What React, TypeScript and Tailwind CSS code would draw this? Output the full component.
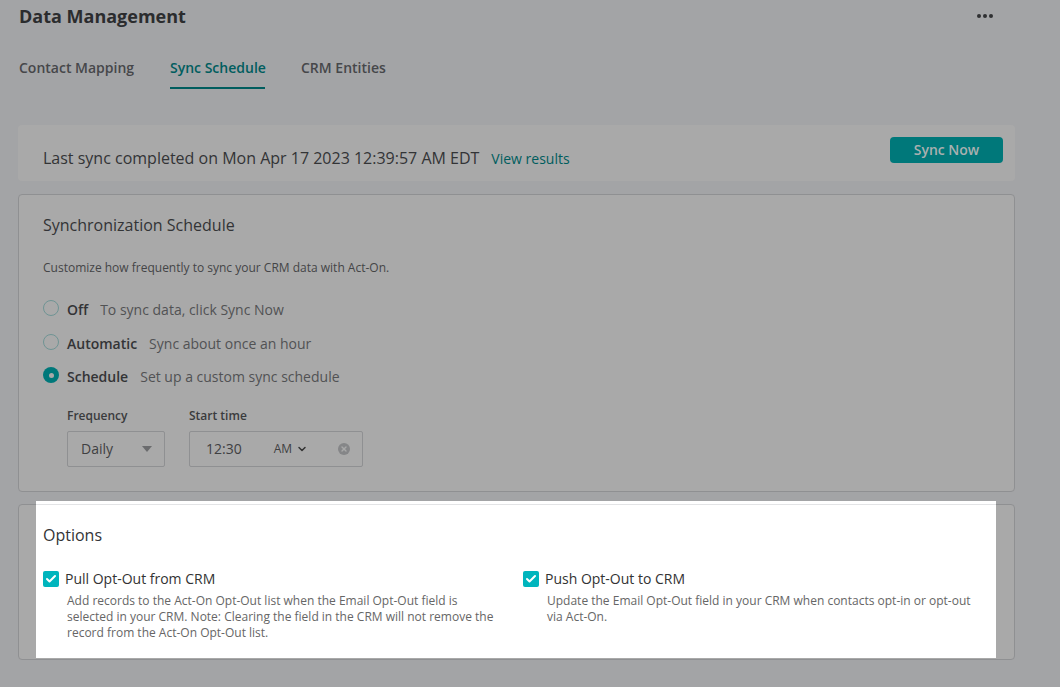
import { Check, ChevronDown, X } from 'lucide-react'

const FONT = "font-['Open_Sans',sans-serif]"

function Radio({ label, hint, checked }: { label: string; hint: string; checked?: boolean }) {
  return (
    <div className="flex items-center h-[20px]">
      {checked ? (
        <span className="w-4 h-4 rounded-full bg-[#00787a] flex items-center justify-center -mt-[4px]">
          <span className="w-[5px] h-[5px] rounded-full bg-[#a9a9a9]" />
        </span>
      ) : (
        <span className="w-4 h-4 rounded-full border border-[#6f9494] -mt-[4px]" />
      )}
      <span className="ml-2 text-sm font-semibold text-[#333436]">{label}</span>
      <span className="ml-3 text-sm text-[#515254]">{hint}</span>
    </div>
  )
}

function Option({ label, text, width, textWidth }: { label: string; text: string; width: string; textWidth: string }) {
  return (
    <div className={width}>
      <div className="flex items-center h-4">
        <span className="w-4 h-4 rounded-[2px] bg-[#00b5bd] flex items-center justify-center">
          <Check className="w-3 h-3 text-white" strokeWidth={4} />
        </span>
        <span className="ml-[6px] text-sm text-[#333]">{label}</span>
      </div>
      <p className={`mt-[6px] ml-6 text-xs leading-4 text-[#666] ${textWidth}`}>{text}</p>
    </div>
  )
}

export default function App() {
  return (
    <div className={`${FONT} w-[1060px] h-[687px] overflow-hidden bg-[#a3a4a6] pl-[18px]`}>
      <div className="w-[997px]">
        {/* Header */}
        <div className="flex items-center justify-between h-[31px] pl-px">
          <h1 className="text-lg font-bold text-[#2b2c2e]">Data Management</h1>
          <div className="flex gap-[2px] mr-[22px]">
            <span className="w-[4px] h-[4px] rounded-full bg-[#2f3032]" />
            <span className="w-[4px] h-[4px] rounded-full bg-[#2f3032]" />
            <span className="w-[4px] h-[4px] rounded-full bg-[#2f3032]" />
          </div>
        </div>

        {/* Tabs */}
        <div className="flex gap-9 mt-[22px] pl-px text-sm font-semibold whitespace-nowrap">
          <div className="w-[115px] h-[36px] pt-[5px] text-[#46474a]">Contact Mapping</div>
          <div className="w-[95px] h-[36px] pt-[5px] text-[#005d5e] border-b-2 border-[#005d5e]">Sync Schedule</div>
          <div className="h-[36px] pt-[5px] text-[#46474a]">CRM Entities</div>
        </div>

        {/* Last sync banner */}
        <div className="flex items-center justify-between h-[56px] mt-[36px] pl-[25px] pr-3 bg-[#a9a9a9] rounded">
          <div className="flex items-baseline pt-[10px]">
            <span className="text-base text-[#333436]">Last sync completed on Mon Apr 17 2023 12:39:57 AM EDT</span>
            <span className="ml-3 text-sm text-[#005d5e]">View results</span>
          </div>
          <button className="w-[113px] h-[26px] -mt-[6px] rounded bg-[#00787a] text-sm font-semibold text-[#a9b0b0]">Sync Now</button>
        </div>

        {/* Synchronization Schedule */}
        <div className="h-[298px] mt-[13px] pl-[24px] pt-[18px] bg-[#a9a9a9] rounded border border-[#8f9092]">
          <h2 className="text-base text-[#333436] leading-[24px]">Synchronization Schedule</h2>
          <p className="mt-[23px] text-xs leading-4 text-[#444547]">Customize how frequently to sync your CRM data with Act-On.</p>
          <div className="mt-[24px] flex flex-col gap-[13.5px]">
            <Radio label="Off" hint="To sync data, click Sync Now" />
            <Radio label="Automatic" hint="Sync about once an hour" />
            <Radio label="Schedule" hint="Set up a custom sync schedule" checked />
          </div>
          <div className="flex gap-6 mt-[21px] ml-6">
            <div>
              <div className="text-xs font-semibold leading-4 text-[#3a3b3d]">Frequency</div>
              <div className="flex items-center justify-between w-[98px] h-[36px] mt-[7px] pl-[13px] pr-3 rounded-[2px] border border-[#8f9092] text-sm text-[#3f4042]">
                Daily
                <span className="w-0 h-0 border-x-[5px] border-x-transparent border-t-[6px] border-t-[#6b6c6e]" />
              </div>
            </div>
            <div>
              <div className="text-xs font-semibold leading-4 text-[#3a3b3d]">Start time</div>
              <div className="flex items-center w-[174px] h-[36px] mt-[7px] pl-4 rounded-[2px] border border-[#8f9092] text-sm text-[#3f4042]">
                <span>12:30</span>
                <span className="ml-[32px] text-xs">AM</span>
                <ChevronDown className="ml-[4px] w-3 h-3 text-[#333]" strokeWidth={3} />
                <span className="ml-[30px] w-3 h-3 rounded-full bg-[#858688] flex items-center justify-center">
                  <X className="w-2 h-2 text-[#a9a9a9]" strokeWidth={4} />
                </span>
              </div>
            </div>
          </div>
        </div>

        {/* Options, lit up over the dimmed page */}
        <div className="relative h-[156px] mt-[12px] pl-[24px] pt-[18px] bg-[#a9a9a9] rounded border border-[#8f9092]">
          <div className="absolute left-[17px] -top-[4px] w-[960px] h-[157px] bg-white">
            <div className="h-px mt-[3px] bg-[#e3e4e6]" />
          </div>
          <div className="relative">
            <h2 className="text-base text-[#333436] leading-[24px]">Options</h2>
            <div className="flex mt-[24px]">
              <Option
                width="w-[480px]"
                textWidth="w-[432px]"
                label="Pull Opt-Out from CRM"
                text="Add records to the Act-On Opt-Out list when the Email Opt-Out field is selected in your CRM. Note: Clearing the field in the CRM will not remove the record from the Act-On Opt-Out list."
              />
              <Option
                width="w-[450px]"
                textWidth="w-[426px]"
                label="Push Opt-Out to CRM"
                text="Update the Email Opt-Out field in your CRM when contacts opt-in or opt-out via Act-On."
              />
            </div>
          </div>
        </div>
      </div>
    </div>
  )
}
